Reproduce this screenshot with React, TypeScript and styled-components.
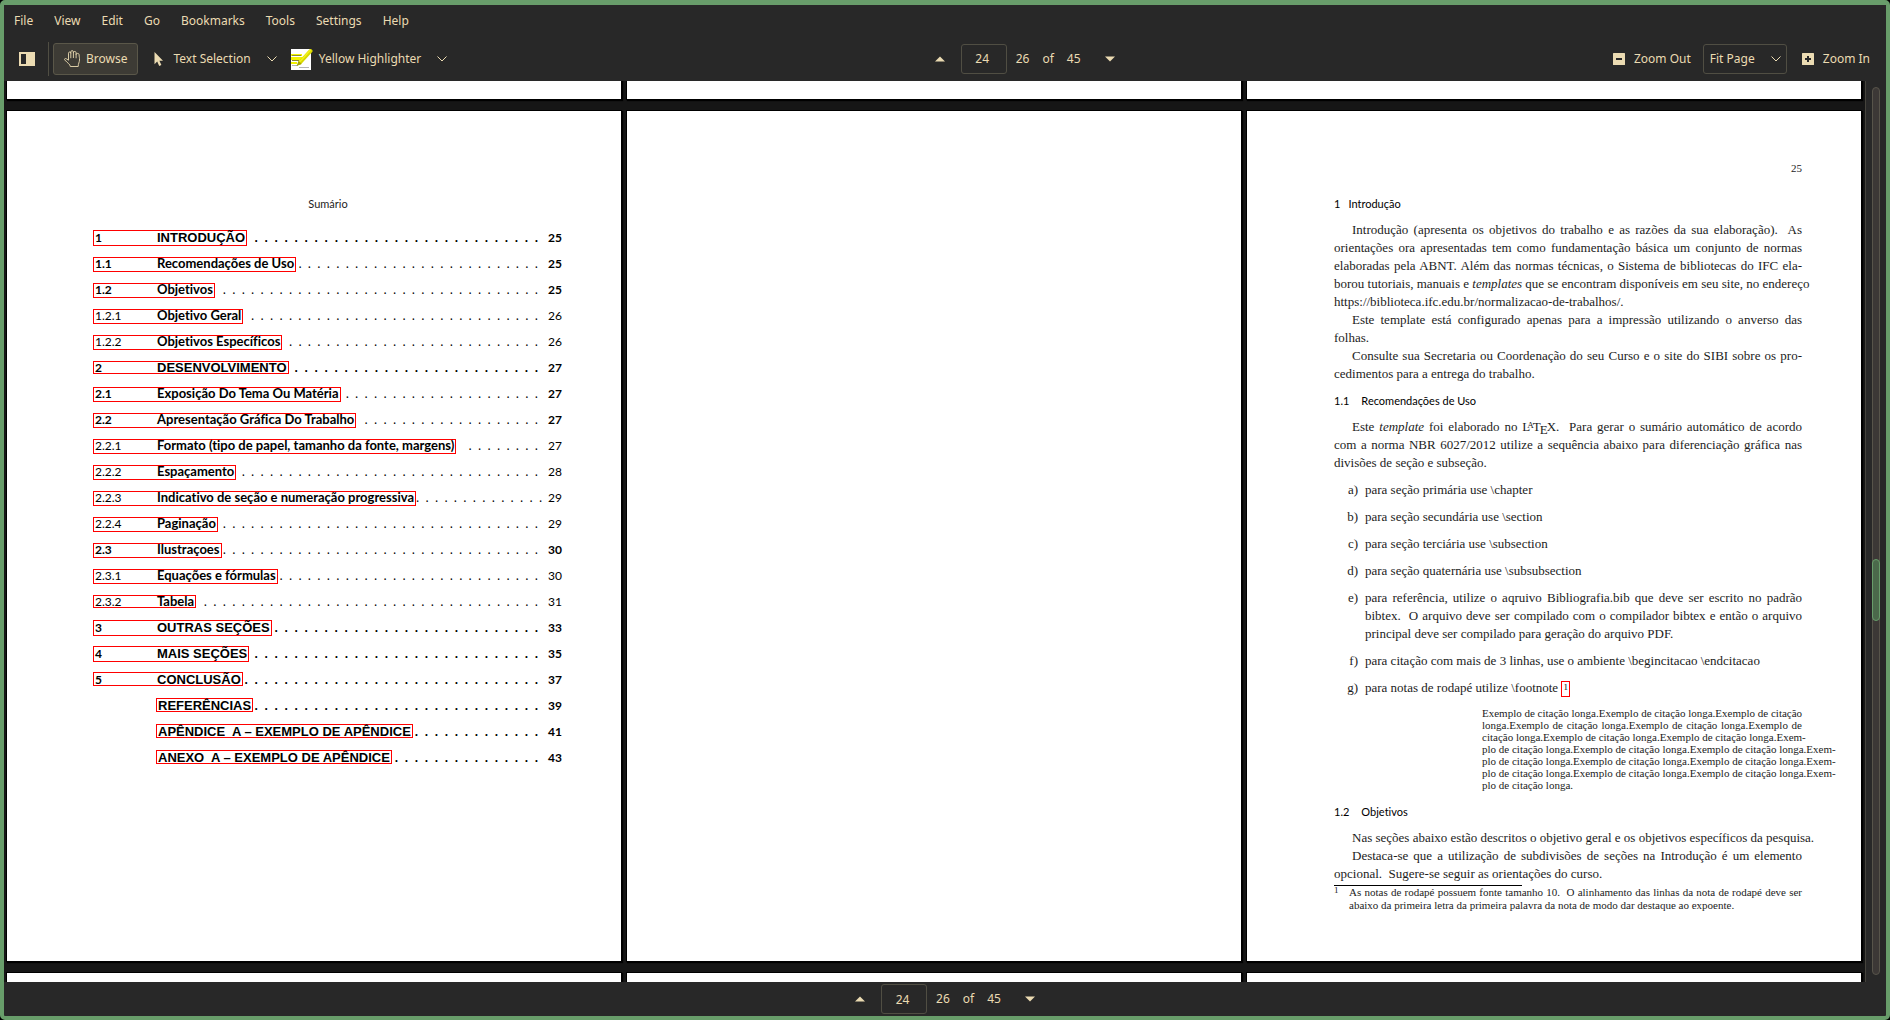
import React from 'react';
import styled, { createGlobalStyle, css } from 'styled-components';

const color = {
  frame: '#689d6a',
  panel: '#282828',
  text: '#ebdbb2',
  line: '#504e43',
  canvas: '#161616',
  link: '#ff0000',
};

const GlobalStyle = createGlobalStyle`
  *, *::before, *::after { box-sizing: border-box; }
  body { margin: 0; background: #000; overflow: hidden; }
  button, input, select { font: inherit; color: inherit; }
`;

/* ---------- window ---------- */

const Window = styled.div`
  display: flex;
  flex-direction: column;
  height: 100vh;
  border: 4px solid ${color.frame};
  border-top-width: 5px;
  border-radius: 5px;
  background: ${color.panel};
  color: ${color.text};
  font: 12px/16px 'Noto Sans', sans-serif;
`;

const MenuBar = styled.nav`
  display: flex;
  flex: none;
  gap: 1px;
  height: 31px;
`;

const MenuItem = styled.button`
  border: 0;
  background: none;
  padding: 0 10px;
`;

const Toolbar = styled.div`
  display: flex;
  flex: none;
  align-items: center;
  justify-content: space-between;
  height: 45px;
  padding: 0 5px 0 15px;
`;

const Group = styled.div`
  display: flex;
  align-items: center;
`;

const ToolButton = styled.button<{ $checked?: boolean; $gap?: number }>`
  display: flex;
  align-items: center;
  gap: ${p => p.$gap ?? 6}px;
  height: 32px;
  margin-right: ${p => (p.$checked ? 2 : 0)}px;
  padding: 0 10px;
  border: 1px solid ${p => (p.$checked ? '#5a5749' : 'transparent')};
  border-radius: 3px;
  background: ${p => (p.$checked ? '#3d3b35' : 'none')};
  white-space: nowrap;
`;

const IconButton = styled.button`
  display: flex;
  align-items: center;
  justify-content: center;
  height: 32px;
  padding: 0;
  border: 0;
  background: none;
`;

const Separator = styled.div`
  width: 1px;
  height: 34px;
  margin: 0 4px 0 13px;
  background: ${color.line};
`;

const ModeMenu = styled(IconButton)`
  margin: 0 3px 0 5px;
  &:last-child { margin-right: 0; }
`;

/* ---------- page navigator ---------- */

const Navigator = styled.div`
  display: flex;
  align-items: center;
  gap: 13px;
`;

const PageField = styled.input`
  width: 46px;
  height: 30px;
  margin: 0 -4px 0 3px;
  padding: 0 3px 0 0;
  border: 1px solid ${color.line};
  border-radius: 3px;
  background: none;
  text-align: center;
`;

const NextButton = styled(IconButton)`
  margin-left: 11px;
`;

const PageNavigator = ({ id }: { id: string }) => (
  <Navigator>
    <IconButton aria-label="Previous page">
      <svg width="10" height="6" viewBox="0 0 10 6"><path d="M0 5.5 5 .5l5 5z" fill={color.text} /></svg>
    </IconButton>
    <PageField id={id} aria-label="Page" defaultValue="24" />
    <span>26</span>
    <span>of</span>
    <span>45</span>
    <NextButton aria-label="Next page">
      <svg width="10" height="6" viewBox="0 0 10 6"><path d="M0 .5h10l-5 5z" fill={color.text} /></svg>
    </NextButton>
  </Navigator>
);

const ZoomBox = styled.label`
  display: grid;
  align-items: center;
  width: 84px;
  height: 30px;
  margin: 0 4px 0 1px;
  border: 1px solid ${color.line};
  border-radius: 3px;

  > * { grid-area: 1 / 1; }
  > svg { justify-self: end; margin-right: 5px; pointer-events: none; }
`;

const ZoomSelect = styled.select`
  appearance: none;
  height: 28px;
  padding: 0 6px;
  border: 0;
  background: none;
`;

/* ---------- icons ---------- */

const Chevron = () => (
  <svg width="10" height="6" viewBox="0 0 10 6" fill="none" stroke={color.text}>
    <path d="M.5.5 5 5 9.500 .5" />
  </svg>
);

const SidebarIcon = () => (
  <svg width="16" height="14" viewBox="0 0 16 14">
    <path fillRule="evenodd" fill={color.text} d="M0 0h16v14H0zM2 2v10h5V2z" />
  </svg>
);

const HandIcon = () => (
  <svg width="16" height="17" viewBox="0 0 16 17" fill="none" stroke={color.text} strokeWidth=".9" strokeLinejoin="round" strokeLinecap="round">
    <path d="M4.500 9.800V3.200c0-1.600 2.300-1.600 2.300 0V1.900c0-1.700 2.600-1.700 2.600 0v.8c0-1.700 2.700-1.600 2.700 0v1.700c0-1.400 3-1.300 3 .2 0 2.500.6 3 .4 5.500-.1 2.200-1.300 3.500-1.300 6.400H6.300c0-2.300-2.800-3.300-5.600-6.600-.7-1.300.9-2 2-.9z" />
    <path d="M6.800 3.200v4.600M9.400 2.600v5M12.100 4.300v3.600" />
  </svg>
);

const CursorIcon = () => (
  <svg width="16" height="16" viewBox="0 0 16 16">
    <path fill={color.text} d="M3.500 1v12.200l2.700-2.600 2 4.400 2.200-1-2-4.200h3.600z" />
  </svg>
);

const HighlighterIcon = () => (
  <svg width="22" height="22" viewBox="0 0 22 22">
    <path fill="#fff" d="M0 1h20v21H0z" />
    <path fill="#f2f200" d="M0 6h11v2H0zM0 9h11v3H0zM0 14h6v2H0z" />
    <path stroke="#8a8a30" d="M1 7.500h9M1 12.500h7" />
    <path stroke="#b5b5b5" d="M1 17.500h6M8 19.500h10" />
    <path d="M19.500 3 9 14.500" stroke="#d8d800" strokeWidth="4" strokeLinecap="round" />
    <path d="M19 2.500 9 13.500" stroke="#f3f31c" strokeWidth="1.500" strokeLinecap="round" />
    <path d="m5.500 18 2-5 3.200 3z" fill="#a5a500" />
  </svg>
);

const ZoomIcon = ({ plus }: { plus?: boolean }) => (
  <svg width="12" height="12" viewBox="0 0 12 12">
    <rect width="12" height="12" rx=".5" fill={color.text} />
    <path d={plus ? 'M3 6h6M6 3v6' : 'M3 6h6'} stroke={color.panel} strokeWidth="2" />
  </svg>
);

/* ---------- document view ---------- */

const Viewer = styled.div`
  display: flex;
  flex: 1;
  min-height: 0;
`;

const Canvas = styled.main`
  display: flex;
  flex: 1;
  flex-direction: column;
  gap: 12px;
  min-width: 0;
  overflow: hidden;
  padding: 0 4px 0 3px;
  border-right: 1px solid #45433c;
  background: ${color.canvas};
`;

const Spread = styled.div<{ $clip?: number }>`
  display: grid;
  grid-template-columns: repeat(3, 1fr);
  gap: 6px;
  ${p => (p.$clip ? css`flex: none; height: ${p.$clip}px;` : css`flex: 1; min-height: 0;`)}
`;

const Sheet = styled.section`
  min-width: 0;
  padding: 48px 59px 0 87px;
  background: #fff;
  box-shadow: 0 0 0 1px #000, 1px 1px 1px 1px #000;
  color: #1c1c1c;
`;

const Edge = styled.div`
  background: #fff;
  box-shadow: 0 0 0 1px #000, 1px 1px 1px 1px #000;
`;

const ScrollArea = styled.div`
  display: flex;
  flex: none;
  width: 20px;
  padding: 6px 6px 7px;
`;

const Track = styled.div`
  display: flex;
  flex: 1;
  flex-direction: column;
  border: 1px solid #57544a;
  border-radius: 4px;
  background: #3c3836;
`;

const Thumb = styled.div`
  height: 62px;
  margin: auto -1px 353px;
  border: 1px solid ${color.frame};
  border-radius: 4px;
  background: #4b694b;
`;

const StatusBar = styled.footer`
  display: flex;
  flex: none;
  align-items: center;
  justify-content: center;
  height: 34px;
`;

/* ---------- table of contents ---------- */

const SumarioTitle = styled.h2`
  margin: 36px 0 12px;
  font: 11px/18px Lato, sans-serif;
  text-align: center;
`;

const TocList = styled.ol`
  margin: 0 0 0 -1px;
  padding: 0;
  list-style: none;
  font: 12px/26px Lato, sans-serif;
  font-variant-ligatures: none;
`;

const TocRow = styled.li`
  display: flex;
  align-items: baseline;
  height: 26px;
`;

const TocLink = styled.a<{ $indent: boolean; $up: number; $down: number }>`
  display: flex;
  align-items: baseline;
  margin-left: ${p => (p.$indent ? 63 : 0)}px;
  padding: ${p => p.$up}px 1px ${p => p.$down}px 0;
  border: 1px solid ${color.link};
  color: #000;
  font-size: 13px;
  font-weight: bold;
  line-height: 9px;
  text-decoration: none;
  white-space: pre;
`;

const TocNumber = styled.span<{ $bold: boolean }>`
  width: 63px;
  padding-left: 1px;
  font-size: 12px;
  font-weight: ${p => (p.$bold ? 'bold' : 'normal')};
`;

const TocText = styled.span<{ $pad: boolean; $chapter: boolean }>`
  padding-left: ${p => (p.$pad ? 1 : 0)}px;
  ${p => p.$chapter && css`font-family: 'Liberation Sans', Arial, sans-serif;`}
`;

const Dots = styled.span<{ $chapter: boolean }>`
  flex: 1;
  color: #000;
  text-align: right;
  white-space: pre;
  font-family: ${p => (p.$chapter ? "'Liberation Sans', Arial, sans-serif" : "'Noto Sans', sans-serif")};
  font-weight: ${p => (p.$chapter ? 'bold' : 'normal')};
`;

const TocPage = styled.span<{ $bold: boolean }>`
  width: 24px;
  color: #000;
  font-weight: ${p => (p.$bold ? 'bold' : 'normal')};
  text-align: right;
`;

type Entry = [number: string, title: string, page: number, dots: number];

const entries: Entry[] = [
  ['1', 'INTRODUÇÃO', 25, 29],
  ['1.1', 'Recomendações de Uso', 25, 26],
  ['1.2', 'Objetivos', 25, 34],
  ['1.2.1', 'Objetivo Geral', 26, 31],
  ['1.2.2', 'Objetivos Específicos', 26, 27],
  ['2', 'DESENVOLVIMENTO', 27, 25],
  ['2.1', 'Exposição Do Tema Ou Matéria', 27, 21],
  ['2.2', 'Apresentação Gráfica Do Trabalho', 27, 19],
  ['2.2.1', 'Formato (tipo de papel, tamanho da fonte, margens)', 27, 8],
  ['2.2.2', 'Espaçamento', 28, 32],
  ['2.2.3', 'Indicativo de seção e numeração progressiva', 29, 14],
  ['2.2.4', 'Paginação', 29, 34],
  ['2.3', 'Ilustraçoes', 30, 34],
  ['2.3.1', 'Equações e fórmulas', 30, 28],
  ['2.3.2', 'Tabela', 31, 36],
  ['3', 'OUTRAS SEÇÕES', 33, 27],
  ['4', 'MAIS SEÇÕES', 35, 29],
  ['5', 'CONCLUSÃO', 37, 30],
  ['', 'REFERÊNCIAS', 39, 29],
  ['', 'APÊNDICE  A – EXEMPLO DE APÊNDICE', 41, 13],
  ['', 'ANEXO  A – EXEMPLO DE APÊNDICE', 43, 15],
];

const Toc = () => (
  <TocList>
    {entries.map(([number, title, page, dots]) => {
      const chapter = !number.includes('.');
      const bold = chapter || number.length === 3;
      return (
        <TocRow key={number + title}>
          <TocLink
            href={`#page-${page}`}
            $indent={!number}
            $up={/[ÃÕÊ]/.test(title) ? 2 : 1}
            $down={/[çÇgpjQ(]/.test(title) ? 3 : 1}
          >
            {number && <TocNumber $bold={bold}>{number}</TocNumber>}
            <TocText $pad={!number} $chapter={chapter}>{title}</TocText>
          </TocLink>
          <Dots $chapter={chapter}>{Array(dots).fill('.').join('  ')}</Dots>
          <TocPage $bold={bold}>{page}</TocPage>
        </TocRow>
      );
    })}
  </TocList>
);

/* ---------- chapter text ---------- */

const Body = styled.div`
  font: 13px/18px 'Liberation Serif', 'Times New Roman', serif;
`;

const Folio = styled.div`
  font-size: 11px;
  text-align: right;
`;

const Heading = styled.h3<{ $top: number; $bottom: number; $gap: number }>`
  display: flex;
  gap: ${p => p.$gap}px;
  margin: ${p => p.$top}px 0 ${p => p.$bottom}px;
  color: #000;
  font: 11px/18px Lato, sans-serif;
  font-variant-ligatures: none;
`;

const Para = styled.p`
  margin: 0;
`;

const Line = styled.span<{ $first?: boolean; $ragged?: boolean }>`
  display: block;
  padding-left: ${p => (p.$first ? 18 : 0)}px;
  white-space: nowrap;
  text-align: ${p => (p.$ragged ? 'left' : 'justify')};
  text-align-last: ${p => (p.$ragged ? 'left' : 'justify')};
`;

const ItemList = styled.ol`
  display: grid;
  gap: 9px;
  margin: 9px 0 10px;
  padding: 0;
  list-style: none;
`;

const Item = styled.li`
  display: grid;
  grid-template-columns: 24px 1fr;
  column-gap: 7px;
`;

const Label = styled.span`
  text-align: right;
`;

const Quote = styled.blockquote`
  margin: 0 0 0 148px;
  font-size: 11px;
  line-height: 12px;
`;

const NoteMark = styled.a`
  display: inline-block;
  height: 16px;
  padding: 0 1px;
  border: 1px solid ${color.link};
  color: #000;
  font-size: 9px;
  line-height: 10px;
  text-decoration: none;
  vertical-align: middle;
`;

const Footnote = styled.aside`
  display: grid;
  grid-template-columns: 15px 1fr;
  margin-top: 1px;
  font-size: 11px;
  line-height: 13px;

  &::before {
    content: '';
    grid-column: 1 / -1;
    width: 188px;
    height: 1px;
    margin-top: 1px;
    background: #000;
  }
`;

const NoteNumber = styled.span`
  font-size: 9px;
  line-height: 9px;
`;

const LatexWord = styled.span`
  span { line-height: 0; }
  span:first-child { margin: 0 -1px 0 -3px; font-size: 9px; vertical-align: 3px; }
  span:last-child { margin: 0 -1px; vertical-align: -3px; }
`;

const items: [string, React.ReactNode][] = [
  ['a)', 'para seção primária use \\chapter'],
  ['b)', 'para seção secundária use \\section'],
  ['c)', 'para seção terciária use \\subsection'],
  ['d)', 'para seção quaternária use \\subsubsection'],
  ['e)', (
    <>
      <Line>para referência, utilize o aqruivo Bibliografia.bib que deve ser escrito no padrão</Line>
      <Line>bibtex.&nbsp; O arquivo deve ser compilado com o compilador bibtex e então o arquivo</Line>
      <Line $ragged>principal deve ser compilado para geração do arquivo PDF.</Line>
    </>
  )],
  ['f)', 'para citação com mais de 3 linhas, use o ambiente \\begincitacao \\endcitacao'],
  ['g)', <>para notas de rodapé utilize \footnote <NoteMark href="#nota-1">1</NoteMark></>],
];

const overfull = 'plo de citação longa.Exemplo de citação longa.Exemplo de citação longa.Exem-';

const Chapter = () => (
  <Body>
    <Folio>25</Folio>
    <Heading $top={18} $bottom={8} $gap={8}><span>1</span><span>Introdução</span></Heading>
    <Para>
      <Line $first>Introdução (apresenta os objetivos do trabalho e as razões da sua elaboração).&nbsp; As</Line>
      <Line>orientações ora apresentadas tem como fundamentação básica um conjunto de normas</Line>
      <Line>elaboradas pela ABNT. Além das normas técnicas, o Sistema de bibliotecas do IFC ela-</Line>
      <Line>borou tutoriais, manuais e <i>templates</i> que se encontram disponíveis em seu site, no endereço</Line>
      <Line $ragged>https://biblioteca.ifc.edu.br/normalizacao-de-trabalhos/.</Line>
    </Para>
    <Para>
      <Line $first>Este template está configurado apenas para a impressão utilizando o anverso das</Line>
      <Line $ragged>folhas.</Line>
    </Para>
    <Para>
      <Line $first>Consulte sua Secretaria ou Coordenação do seu Curso e o site do SIBI sobre os pro-</Line>
      <Line $ragged>cedimentos para a entrega do trabalho.</Line>
    </Para>
    <Heading $top={9} $bottom={8} $gap={12}><span>1.1</span><span>Recomendações de Uso</span></Heading>
    <Para>
      <Line $first>
        Este <i>template</i> foi elaborado no <LatexWord>L<span>A</span>T<span>E</span>X</LatexWord>.&nbsp; Para gerar o sumário automático de acordo
      </Line>
      <Line>com a norma NBR 6027/2012 utilize a sequência abaixo para diferenciação gráfica nas</Line>
      <Line $ragged>divisões de seção e subseção.</Line>
    </Para>
    <ItemList>
      {items.map(([label, content]) => (
        <Item key={label}><Label>{label}</Label><div>{content}</div></Item>
      ))}
    </ItemList>
    <Quote>
      <Line>Exemplo de citação longa.Exemplo de citação longa.Exemplo de citação</Line>
      <Line>longa.Exemplo de citação longa.Exemplo de citação longa.Exemplo de</Line>
      <Line>citação longa.Exemplo de citação longa.Exemplo de citação longa.Exem-</Line>
      <Line>{overfull}</Line>
      <Line>{overfull}</Line>
      <Line>{overfull}</Line>
      <Line $ragged>plo de citação longa.</Line>
    </Quote>
    <Heading $top={12} $bottom={8} $gap={12}><span>1.2</span><span>Objetivos</span></Heading>
    <Para>
      <Line $first>Nas seções abaixo estão descritos o objetivo geral e os objetivos específicos da pesquisa.</Line>
    </Para>
    <Para>
      <Line $first>Destaca-se que a utilização de subdivisões de seções na Introdução é um elemento</Line>
      <Line $ragged>opcional.&nbsp; Sugere-se seguir as orientações do curso.</Line>
    </Para>
    <Footnote id="nota-1">
      <NoteNumber>1</NoteNumber>
      <div>
        <Line>As notas de rodapé possuem fonte tamanho 10.&nbsp; O alinhamento das linhas da nota de rodapé deve ser</Line>
        <Line $ragged>abaixo da primeira letra da primeira palavra da nota de modo dar destaque ao expoente.</Line>
      </div>
    </Footnote>
  </Body>
);

const menus = ['File', 'View', 'Edit', 'Go', 'Bookmarks', 'Tools', 'Settings', 'Help'];

export default function App() {
  return (
    <>
      <GlobalStyle />
      <Window>
        <MenuBar>
          {menus.map(m => <MenuItem key={m}>{m}</MenuItem>)}
        </MenuBar>
        <Toolbar>
          <Group>
            <IconButton aria-label="Show sidebar"><SidebarIcon /></IconButton>
            <Separator />
            <ToolButton $checked aria-pressed="true"><HandIcon />Browse</ToolButton>
            <ToolButton><CursorIcon />Text Selection</ToolButton>
            <ModeMenu aria-label="Selection modes"><Chevron /></ModeMenu>
            <ToolButton><HighlighterIcon />Yellow Highlighter</ToolButton>
            <ModeMenu aria-label="Annotation tools"><Chevron /></ModeMenu>
          </Group>
          <PageNavigator id="page-top" />
          <Group>
            <ToolButton $gap={9}><ZoomIcon />Zoom Out</ToolButton>
            <ZoomBox>
              <ZoomSelect aria-label="Zoom" defaultValue="Fit Page"><option>Fit Page</option></ZoomSelect>
              <Chevron />
            </ZoomBox>
            <ToolButton $gap={9}><ZoomIcon plus />Zoom In</ToolButton>
          </Group>
        </Toolbar>
        <Viewer>
          <Canvas>
            <Spread $clip={18}><Edge /><Edge /><Edge /></Spread>
            <Spread>
              <Sheet>
                <SumarioTitle>Sumário</SumarioTitle>
                <Toc />
              </Sheet>
              <Sheet />
              <Sheet><Chapter /></Sheet>
            </Spread>
            <Spread $clip={9}><Edge /><Edge /><Edge /></Spread>
          </Canvas>
          <ScrollArea><Track><Thumb /></Track></ScrollArea>
        </Viewer>
        <StatusBar><PageNavigator id="page-bottom" /></StatusBar>
      </Window>
    </>
  );
}
